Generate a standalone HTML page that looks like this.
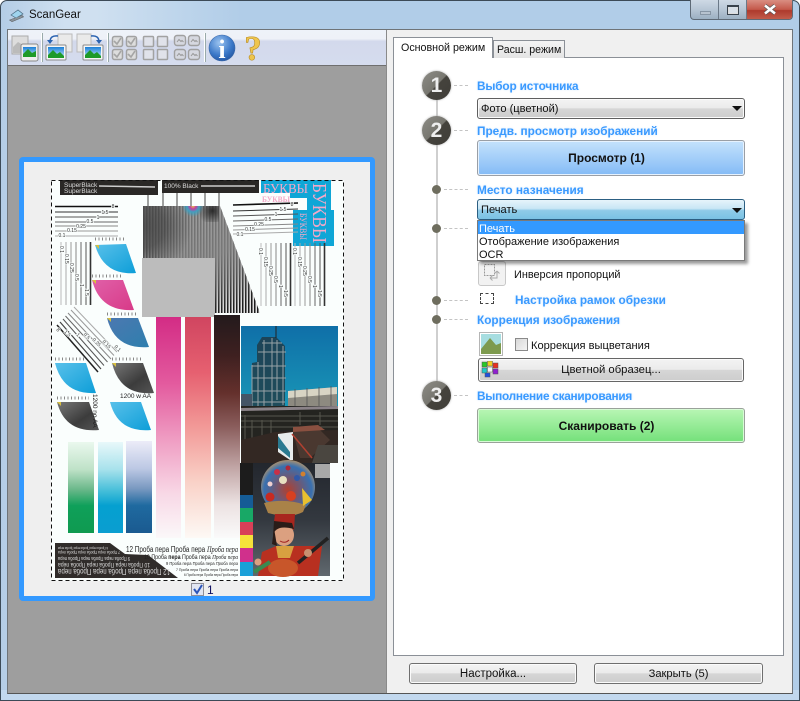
<!DOCTYPE html>
<html><head><meta charset="utf-8"><style>
*{box-sizing:border-box}
html,body{margin:0;padding:0;width:800px;height:701px;overflow:hidden;background:#fff}
body{font:11px "Liberation Sans",sans-serif;color:#111;position:relative}
.a{position:absolute}
.t{position:absolute;white-space:nowrap;line-height:14px}
.h{position:absolute;white-space:nowrap;font-weight:bold;color:#3a9aff;font-size:11.8px;line-height:14px;text-shadow:0 0 2px #cfe6ff}
.btn{position:absolute;border:1px solid #707070;border-radius:3px;background:linear-gradient(#f3f3f3 0,#ebebeb 48%,#d6d6d6 50%,#cdcdcd 100%);text-align:center;box-shadow:inset 0 0 0 1px #fbfbfb}
.num{position:absolute;width:29px;height:29px;border-radius:50%;background:linear-gradient(135deg,#8d8c86 0,#77766f 49%,#45433d 51%,#3f3d38 100%);box-shadow:0 0 2px #aaa;color:#eee;font:bold 21px/29px "Liberation Sans",sans-serif;text-align:center}
.dot{position:absolute;width:9px;height:9px;border-radius:50%;background:#6e6d5e}
.dash{position:absolute;width:14px;border-top:1px dashed #c4c4c4}
.arrow{position:absolute;width:0;height:0;border-left:5px solid transparent;border-right:5px solid transparent;border-top:5px solid #111}
</style></head><body>

<div class="a" style="left:0;top:0;width:800px;height:701px;border:1px solid #3c4a57;border-radius:7px 7px 0 0;background:linear-gradient(90deg,#b4cde6 0,#cfe0f0 8%,#cfe0f0 12%,#b1cde8 30%,#b1cde8 100%)"></div>
<div class="a" style="left:1px;top:690px;width:798px;height:10px;background:#c2d8ee"></div>

<svg class="a" style="left:8px;top:6px" width="18" height="18" viewBox="0 0 18 18"><path d="M1 14 L14 9 L16 11 L4 16Z" fill="#555"/><path d="M3 9 L10 4 L15 8 L8 12Z" fill="#9fd4ee" stroke="#4a6a80" stroke-width=".7"/><path d="M2 14 L14 9.5 L15 11 L4 15.5Z" fill="#8a949c"/></svg>
<div class="t" style="left:29px;top:8px;font-size:11.5px">ScanGear</div>

<div class="a" style="left:690px;top:0;width:103px;height:20px;border:1px solid #5e6a76;border-top:0;border-radius:0 0 4px 4px;overflow:hidden;background:linear-gradient(#ced9e5,#b7c6d5 50%,#9cb0c2)">
 <div class="a" style="left:27px;top:0;width:1px;height:20px;background:#6b7988"></div>
 <div class="a" style="left:55px;top:0;width:1px;height:20px;background:#6b7988"></div>
 <div class="a" style="left:9px;top:11px;width:11px;height:4px;background:#b7c3cf;border:1px solid #8796a5"></div>
 <div class="a" style="left:36px;top:5px;width:12px;height:10px;border:1px solid #39434d;background:#d8e0e8;box-shadow:inset 0 1px 0 #39434d,inset 0 0 0 1px #ddd"></div>
 <div class="a" style="left:56px;top:0;width:46px;height:20px;background:linear-gradient(#d98e82,#c4584a 48%,#ad3a2c 52%,#c4604e)"></div>
 <svg class="a" style="left:72px;top:4px" width="14" height="11"><path d="M2 1.5L12 9.5M12 1.5L2 9.5" stroke="#555" stroke-width="4"/><path d="M2 1.5L12 9.5M12 1.5L2 9.5" stroke="#fff" stroke-width="2.6"/></svg>
</div>

<!-- client -->
<div class="a" style="left:7px;top:29px;width:786px;height:665px;background:#f0f0f0;border:1px solid #6f7478;border-bottom:1px solid #555"></div>

<!-- toolbar -->
<div class="a" style="left:8px;top:30px;width:378px;height:35px;background:linear-gradient(#eef2f9 0,#eef1f8 25%,#d3d9ec 32%,#d5dcee 100%)"></div>
<div class="a" style="left:8px;top:65px;width:378px;height:1px;background:#6f6f6f"></div>
<div class="a" style="left:8px;top:66px;width:378px;height:627px;background:#9e9e9e"></div>
<div class="a" style="left:386px;top:30px;width:1px;height:663px;background:#8a8a8a"></div>

<svg class="a" style="left:8px;top:30px" width="290" height="35" viewBox="0 0 290 35">
 <defs>
  <linearGradient id="sky" x1="0" y1="0" x2="0" y2="1"><stop offset="0" stop-color="#1a7fd8"/><stop offset="1" stop-color="#d0eefa"/></linearGradient>
  <radialGradient id="inf" cx=".4" cy=".3" r=".8"><stop offset="0" stop-color="#9cc4f0"/><stop offset=".6" stop-color="#3b78c8"/><stop offset="1" stop-color="#1f4f9a"/></radialGradient>
  <g id="pic"><rect x="0" y="0" width="20" height="15" fill="#f6f6f6" stroke="#8a8a8a" rx="1"/><rect x="2" y="2" width="16" height="11" fill="url(#sky)"/><path d="M2 13V10L7 5L11 9L14 7L18 11V13Z" fill="#1e9a28"/></g>
  <g id="chk"><rect x=".5" y=".5" width="10" height="10" rx="2" fill="#ddd" stroke="#a2a2a2" stroke-width="1.5"/><path d="M2 5L5 8L9 2" fill="none" stroke="#a5a5a5" stroke-width="1.6"/></g>
  <g id="box"><rect x=".5" y=".5" width="10" height="10" rx="1" fill="#e0e2ea" stroke="#a2a2a2" stroke-width="1.5"/></g>
  <g id="pb"><rect x=".5" y=".5" width="11" height="10" rx="2.5" fill="#d6d8e0" stroke="#a0a0a0" stroke-width="1.4"/><path d="M3 7L5 4.5L7 6.5L8 5.5L9.5 7" fill="none" stroke="#999"/></g>
 </defs>
 <rect x="4" y="6" width="16" height="18" fill="#ddd" stroke="#aaa"/><path d="M5 17L10 12L15 15V23H5Z" fill="#bbb"/>
 <rect x="13" y="14" width="17" height="17" rx="2" fill="#eee" stroke="#888"/><rect x="15" y="17" width="13" height="10" fill="url(#sky)"/><path d="M15 27V24L20 19L24 23L28 21V27Z" fill="#1e9a28"/>
 <rect x="33" y="3" width="1" height="29" fill="#fff"/><rect x="34" y="3" width="1" height="29" fill="#9aa"/>
 <rect x="50" y="4" width="14" height="18" fill="#eaeaea" stroke="#bbb"/>
 <path d="M50 6Q42 5 42 12" fill="none" stroke="#2a62b0" stroke-width="1.5"/><path d="M39 10L45 10L42 14Z" fill="#2a62b0"/>
 <use href="#pic" x="38" y="15"/>
 <rect x="69" y="4" width="14" height="18" fill="#eaeaea" stroke="#bbb"/>
 <path d="M83 6Q91 5 91 12" fill="none" stroke="#2a62b0" stroke-width="1.5"/><path d="M88 10L94 10L91 14Z" fill="#2a62b0"/>
 <use href="#pic" x="75" y="15"/>
 <rect x="99" y="3" width="1" height="29" fill="#fff"/><rect x="100" y="3" width="1" height="29" fill="#9aa"/>
 <use href="#chk" x="104" y="6"/><use href="#chk" x="118" y="6"/><use href="#chk" x="104" y="19"/><use href="#chk" x="118" y="19"/>
 <use href="#box" x="135" y="6"/><use href="#box" x="149" y="6"/><use href="#box" x="135" y="19"/><use href="#box" x="149" y="19"/>
 <use href="#pb" x="166" y="5"/><use href="#pb" x="180" y="5"/><use href="#pb" x="166" y="19"/><use href="#pb" x="180" y="19"/>
 <rect x="196" y="3" width="1" height="29" fill="#fff"/><rect x="197" y="3" width="1" height="29" fill="#9aa"/>
 <circle cx="214" cy="18" r="13" fill="url(#inf)" stroke="#3a68a8" stroke-width=".6"/>
 <text x="214" y="28" font-family="Liberation Serif" font-weight="bold" font-size="26" fill="#fff" text-anchor="middle">i</text>
 <text x="245" y="30" font-family="Liberation Serif" font-weight="bold" font-size="35" fill="#eec54e" stroke="#b98c22" stroke-width=".6" text-anchor="middle">?</text>
</svg>

<!-- preview frame -->
<div class="a" style="left:19px;top:157px;width:356px;height:444px;background:#efefef;border:5px solid #3399ff;border-radius:4px"></div>
<div class="a" style="left:51px;top:180px;width:293px;height:401px;background:#fafefd"></div>

<!-- moire -->
<div class="a" style="left:143px;top:206px;width:118px;height:108px;clip-path:polygon(0 0,77px 0,117px 107px,0 107px);background:repeating-linear-gradient(90deg,#111 0,#111 1.5px,#eee 1.5px,#eee 3px)"></div>
<div class="a" style="left:143px;top:206px;width:118px;height:108px;clip-path:polygon(0 0,77px 0,117px 107px,0 107px);background:radial-gradient(circle at 50px 0,#e8c84a 0,#c040a0 3px,#40a0c0 6px,rgba(135,135,135,.8) 11px,rgba(135,135,135,.88) 55px,rgba(130,130,130,.6) 80px,rgba(130,130,130,.1) 110px)"></div>
<div class="a" style="left:143px;top:206px;width:50px;height:52px;background:radial-gradient(circle at 0 20px,rgba(30,30,30,.55) 0,rgba(30,30,30,.45) 22px,rgba(30,30,30,0) 48px)"></div>
<div class="a" style="left:197px;top:206px;width:22px;height:16px;background:radial-gradient(circle at 70% 30%,#2a2a2a,rgba(60,60,60,0) 75%)"></div>
<div class="a" style="left:142px;top:258px;width:73px;height:59px;background:#bcbcbc"></div>
<!-- strips -->
<div class="a" style="left:156px;top:317px;width:25px;height:221px;background:linear-gradient(#d32c85 0,#e35a9e 30%,#ef9cc2 55%,#f8d8e6 80%,#fbf8f9 100%)"></div>
<div class="a" style="left:185px;top:317px;width:26px;height:221px;background:linear-gradient(#d04560 0,#e66070 25%,#f29a98 50%,#f9d2c8 75%,#fdf9f5 100%)"></div>
<div class="a" style="left:214px;top:315px;width:26px;height:223px;background:linear-gradient(#231a1c 0,#3e2020 18%,#64302c 35%,#8a5d5c 50%,#c0a4a4 68%,#ece2e2 85%,#fafafa 100%)"></div>
<div class="a" style="left:68px;top:442px;width:26px;height:91px;background:linear-gradient(#eaf8ee 0,#bfe2c8 30%,#6bb88a 52%,#0fa05a 70%,#0f9a50 100%)"></div>
<div class="a" style="left:98px;top:442px;width:25px;height:91px;background:linear-gradient(#e8f8fa 0,#a8e2ec 30%,#40bcd8 55%,#05a0d0 70%,#0a9ed0 100%)"></div>
<div class="a" style="left:126px;top:441px;width:26px;height:92px;background:linear-gradient(#ececf8 0,#bcc8e4 30%,#7898c0 52%,#1f6aa0 70%,#1a5a90 100%)"></div>

<svg class="a" style="left:51px;top:180px" width="293" height="401" viewBox="51 180 293 401" font-family="Liberation Sans">
 <defs>
  <linearGradient id="cy" x1="0" y1="0" x2="1" y2="1"><stop offset="0" stop-color="#58c0ea"/><stop offset="1" stop-color="#0d9ed8"/></linearGradient>
  <linearGradient id="mg" x1="0" y1="0" x2="1" y2="1"><stop offset="0" stop-color="#e060a8"/><stop offset="1" stop-color="#d83a88"/></linearGradient>
  <linearGradient id="bl" x1="0" y1="0" x2="1" y2="1"><stop offset="0" stop-color="#4c78b0"/><stop offset="1" stop-color="#2e7fae"/></linearGradient>
  <linearGradient id="bk" x1="0" y1="0" x2="1" y2="1"><stop offset="0" stop-color="#777"/><stop offset=".6" stop-color="#3c3c3c"/><stop offset="1" stop-color="#555"/></linearGradient>
  <linearGradient id="sky2" x1="0" y1="0" x2="0" y2="1"><stop offset="0" stop-color="#0f6fa8"/><stop offset=".65" stop-color="#1a9ab8"/><stop offset="1" stop-color="#5cb4c0"/></linearGradient>
  <radialGradient id="hat" cx=".5" cy=".55" r=".55"><stop offset="0" stop-color="#b04030"/><stop offset=".45" stop-color="#6a5a78"/><stop offset=".8" stop-color="#3870b0"/><stop offset="1" stop-color="#a89070"/></radialGradient>
  <linearGradient id="bgw" x1="0" y1="0" x2="0" y2="1"><stop offset="0" stop-color="#23272e"/><stop offset=".5" stop-color="#33383f"/><stop offset="1" stop-color="#60686e"/></linearGradient>
 </defs>
 <!-- black boxes -->
 <rect x="60" y="180" width="98" height="15" fill="#2a2826"/>
 <text x="64" y="187" font-size="6.5" fill="#ddd">SuperBlack</text><text x="64" y="193" font-size="6.5" fill="#ddd">SuperBlack</text>
 <path d="M99 186L155 187" stroke="#ccc" stroke-width="1.5"/>
 <rect x="162" y="179" width="97" height="14" fill="#2a2826"/>
 <text x="164" y="188" font-size="6.5" fill="#ddd">100% Black</text>
 <path d="M201 186L255 186" stroke="#ccc" stroke-width="1.5"/>
 <path d="M148 195V206M163 193V206M177 193V206M191 193V206M205 193V206M219 193V206" stroke="#444" stroke-width="1"/>
 <!-- blue letters -->
 <path d="M261 179H331V210H334V246H293V210H307V198H290V193H261Z" fill="#0fa6d6"/>
 <text x="263" y="193" font-family="Liberation Serif" font-size="14" textLength="45" lengthAdjust="spacingAndGlyphs" fill="#f4a8c8">БУКВЫ</text>
 <text x="262" y="202" font-family="Liberation Serif" font-size="8" font-weight="bold" textLength="28" lengthAdjust="spacingAndGlyphs" fill="#f4a8c8">БУКВЫ</text>
 <text transform="translate(313,183) rotate(90)" font-family="Liberation Serif" font-size="20" textLength="60" lengthAdjust="spacingAndGlyphs" fill="#f4a8c8">БУКВЫ</text>
 <text transform="translate(300,213) rotate(90)" font-family="Liberation Serif" font-size="9" textLength="27" lengthAdjust="spacingAndGlyphs" fill="#f4a8c8">БУКВЫ</text>
 <!-- horizontal line groups -->
 <g stroke-width="1"><path d="M55 206.5H118" stroke="#111" stroke-width="1.6"/><path d="M55 212H118" stroke="#333"/><path d="M55 217H118" stroke="#555"/><path d="M55 222H118" stroke="#666"/><path d="M55 226H118" stroke="#888"/><path d="M55 231H118" stroke="#999"/><path d="M55 236H118" stroke="#aaa"/></g>
 <g font-size="5" fill="#333" text-anchor="middle" paint-order="stroke" stroke="#fafefd" stroke-width="1.5"><text x="113" y="208">8</text><text x="105" y="214">1.5</text><text x="98" y="219">1</text><text x="90" y="223">0.5</text><text x="81" y="228">0.25</text><text x="72" y="232">0.15</text><text x="62" y="237">0.1</text></g>
 <g stroke-width="1"><path d="M233 205L298 203" stroke="#111" stroke-width="1.6"/><path d="M233 211L298 209" stroke="#333"/><path d="M233 216L298 214" stroke="#555"/><path d="M233 221L298 219" stroke="#666"/><path d="M233 226L298 224" stroke="#888"/><path d="M233 230L298 228" stroke="#999"/><path d="M233 234L298 232" stroke="#aaa"/></g>
 <g font-size="5" fill="#333" text-anchor="middle" paint-order="stroke" stroke="#fafefd" stroke-width="1.5"><text x="292" y="206">8</text><text x="283" y="211">1.5</text><text x="276" y="216">1</text><text x="268" y="221">0.5</text><text x="259" y="226">0.25</text><text x="250" y="231">0.15</text><text x="240" y="236">0.1</text></g>
 <!-- vertical groups -->
 <g id="vg"><path d="M61 242V305" stroke="#bbb"/><path d="M66 242V305" stroke="#aaa"/><path d="M71 242V305" stroke="#999"/><path d="M76 242V305" stroke="#888"/><path d="M81 242V305" stroke="#666"/><path d="M86 242V305" stroke="#555"/><path d="M90.5 242V305" stroke="#333" stroke-width="1.6"/></g>
 <use href="#vg" x="200" y="1"/>
 <use href="#vg" x="234" y="1"/>
 <g font-size="5" fill="#333" paint-order="stroke" stroke="#fafefd" stroke-width="1.5"><text transform="translate(60,246) rotate(90)">0.1</text><text transform="translate(65,254) rotate(90)">0.15</text><text transform="translate(70,263) rotate(90)">0.25</text><text transform="translate(75,274) rotate(90)">0.5</text><text transform="translate(80,284) rotate(90)">1</text><text transform="translate(85,289) rotate(90)">1.5</text>
 <text transform="translate(259,248) rotate(90)">0.1</text><text transform="translate(264,257) rotate(90)">0.15</text><text transform="translate(269,266) rotate(90)">0.25</text><text transform="translate(274,276) rotate(90)">0.5</text><text transform="translate(279,285) rotate(90)">1</text><text transform="translate(284,290) rotate(90)">1.5</text>
 <text transform="translate(293,248) rotate(90)">0.1</text><text transform="translate(298,257) rotate(90)">0.15</text><text transform="translate(303,266) rotate(90)">0.25</text><text transform="translate(308,276) rotate(90)">0.5</text><text transform="translate(313,285) rotate(90)">1</text><text transform="translate(318,290) rotate(90)">1.5</text></g>
 <!-- diagonal -->
 <g stroke-width="1"><path d="M57 325L98 372" stroke="#222" stroke-width="1.5"/><path d="M60 322L101 369" stroke="#444" stroke-width="1.2"/><path d="M63 319L104 365.5" stroke="#555"/><path d="M65.5 316L107.5 362" stroke="#666"/><path d="M68 313L111 359" stroke="#888"/><path d="M71 310L114 355.5" stroke="#999"/><path d="M74 307L117 352" stroke="#aaa"/></g>
 <g font-size="5" fill="#333" paint-order="stroke" stroke="#fafefd" stroke-width="1.5"><text transform="translate(56,330) rotate(45)">8</text><text transform="translate(64,332) rotate(45)">1.5</text><text transform="translate(76,335) rotate(45)">1</text><text transform="translate(83,335) rotate(45)">0.5</text><text transform="translate(92,340) rotate(45)">0.25</text><text transform="translate(102,342) rotate(45)">0.15</text><text transform="translate(114,347) rotate(45)">0.1</text></g>
 <!-- tick rows -->
 <path d="M95 239H126M92 276H123M107 314H138M55 359H86M112 359H143M57 398H89" stroke="#888" stroke-width="3" stroke-dasharray="1 2.5"/>
 <!-- wedges -->
 <path d="M95 245L126 244L136 273Q104 276 95 245Z" fill="url(#cy)"/>
 <path d="M92 280L123 280L134 310Q100 312 92 280Z" fill="url(#mg)"/>
 <path d="M107 318L138 318L149 347Q115 350 107 318Z" fill="url(#bl)"/>
 <path d="M55 363L86 363L96 393Q63 395 55 363Z" fill="url(#cy)"/>
 <path d="M112 363L143 363L154 393Q120 396 112 363Z" fill="url(#bk)"/>
 <path d="M57 402L89 402L99 430Q65 433 57 402Z" fill="url(#bk)"/>
 <path d="M110 402L141 402L151 430Q118 433 110 402Z" fill="url(#cy)"/>
 <path d="M95 245h4v4zM92 280h4v4zM107 318h4v4zM57 402h4v4zM112 363h4v4z" fill="#d8c040"/>
 <text x="120" y="398" font-size="6.5" fill="#222">1200 w AA</text>
 <text transform="translate(93,394) rotate(90)" font-size="6.5" fill="#222">1200 no AA</text>
 <!-- refinery -->
 <rect x="241" y="326" width="97" height="137" fill="url(#sky2)"/>
 <path d="M252 407V363L257 362V345L262 337H276L285 346V407Z" fill="#22343c" opacity=".75"/>
 <g stroke="#98a2a6" stroke-width="1" fill="none"><path d="M252 365V407M258 362V407M264 340V407M272 338V407M277 340V400M283 346V405"/><path d="M252 366H286M252 378H286M252 391H286M258 352H286M262 343H282M252 402H285"/></g>
 <path d="M276 326V338" stroke="#222"/>
 <path d="M241 394H252V407H241Z" fill="#456"/>
 <path d="M288 391L337 387V407H288Z" fill="#8d8a80"/><path d="M288 391L337 387V394L288 398Z" fill="#d8d4c4"/><path d="M295 389V407M307 388V407M319 387V407M331 386V407" stroke="#555" stroke-width=".8"/>
 <path d="M241 406H338V463H241Z" fill="#242420"/>
 <path d="M241 408L338 406V409L241 411Z" fill="#8a8288"/>
 <path d="M241 416H338M241 421H338M241 427H338M245 415V460M252 420V458M262 420V450M271 420V445M300 412V425M320 412V425" stroke="#56564e" stroke-width="1"/>
 <path d="M241 440L275 432L338 430V463H241Z" fill="#332823"/>
 <path d="M278 434L293 432V460L290 460L278 452Z" fill="#e8ecec"/><path d="M278 436L290 452V458L278 448Z" fill="#2a7a90"/>
 <path d="M293 432L318 428L330 440L310 458H300Z" fill="#4a3830"/>
 <path d="M292 434L312 458" stroke="#b04030" stroke-width="1.5"/>
 <path d="M293 427L318 425L325 430L293 432Z" fill="#8a5040"/>
 <path d="M318 445H338V463H312Z" fill="#4a4640"/>
 <!-- woman photo -->
 <rect x="240" y="463" width="90" height="113" fill="url(#bgw)"/>
 <rect x="240" y="463" width="13" height="32" fill="#1c1c1c"/>
 <rect x="240" y="495" width="13" height="13" fill="#155c96"/>
 <rect x="240" y="508" width="13" height="14" fill="#18a866"/>
 <rect x="240" y="522" width="13" height="13" fill="#d84058"/>
 <rect x="240" y="535" width="13" height="13" fill="#f6e23a"/>
 <rect x="240" y="548" width="13" height="14" fill="#d0308c"/>
 <rect x="240" y="562" width="13" height="14" fill="#18a0d8"/>
 <rect x="315" y="464" width="15" height="14" fill="#a8a8a8"/>
 <rect x="330" y="464" width="8" height="112" fill="#fafefd"/>
 <circle cx="288" cy="487" r="27" fill="url(#hat)"/>
 <path d="M264 503Q285 498 306 505L303 512Q290 519 268 513Z" fill="#a98248"/>
 <circle cx="270" cy="497" r="4.5" fill="#c82a20"/><circle cx="291" cy="496" r="5" fill="#d84020"/><path d="M302 488L312 500L303 506Z" fill="#e8c030"/><circle cx="283" cy="480" r="4" fill="#e8e0c0"/><circle cx="277" cy="472" r="3" fill="#c83048"/><circle cx="297" cy="478" r="3" fill="#3058a8"/><circle cx="288" cy="468" r="2.5" fill="#b02838"/><circle cx="270" cy="484" r="2.5" fill="#f0d0d0"/><circle cx="303" cy="474" r="2.5" fill="#d08030"/>
 <path d="M275 514H295L294 530L283 525L274 522Z" fill="#a8261e"/>
 <ellipse cx="284" cy="535" rx="10" ry="11" fill="#dba080"/><path d="M273 536Q275 524 294 529L292 523L274 521Z" fill="#2a1c18"/><path d="M274 528L272 544L277 546Z" fill="#2a1c18"/>
 <path d="M280 541Q285 544 289 540" stroke="#a02020" fill="none"/>
 <path d="M262 552L276 546H292L322 546L318 576H258Z" fill="#b83020"/>
 <path d="M276 546H294L290 558L278 558Z" fill="#d8a040"/>
 <ellipse cx="283" cy="568" rx="15" ry="9" fill="#c8562a"/>
 <path d="M298 563L328 538" stroke="#222" stroke-width="3.5"/>
 <path d="M254 572L270 562" stroke="#3a8a50" stroke-width="4"/>
 <circle cx="258" cy="562" r="3.5" fill="#dba080"/><circle cx="308" cy="553" r="4" fill="#c89070"/>
 <!-- bottom text -->
 <path d="M55 543H110L125 554L148 555L178 578H55Z" fill="#302c2a"/>
 <g fill="#dcdcdc">
  <text transform="translate(170,569) rotate(180)" font-size="8" textLength="112" lengthAdjust="spacingAndGlyphs">12 Проба пера Проба пера Проба пера</text>
  <text transform="translate(150,563) rotate(180)" font-size="6" textLength="92" lengthAdjust="spacingAndGlyphs">10 Проба пера Проба пера Проба пера</text>
  <text transform="translate(130,557) rotate(180)" font-size="5" textLength="72" lengthAdjust="spacingAndGlyphs">9 Проба пера Проба пера Проба пера</text>
  <text transform="translate(120,551) rotate(180)" font-size="4.5" textLength="62" lengthAdjust="spacingAndGlyphs">7 Проба пера Проба пера Проба пера</text>
  <text transform="translate(108,547) rotate(180)" font-size="4" textLength="50" lengthAdjust="spacingAndGlyphs">6 Проба пера Проба пера Проба пера</text>
 </g>
 <g fill="#222">
  <text x="126" y="552" font-size="8" textLength="112" lengthAdjust="spacingAndGlyphs">12 Проба пера Проба пера <tspan font-style="italic" font-family="Liberation Serif">Проба пера</tspan></text>
  <text x="144" y="559" font-size="6" textLength="94" lengthAdjust="spacingAndGlyphs">10 Проба <tspan font-weight="bold">пера</tspan> Проба пера <tspan font-style="italic" font-family="Liberation Serif">Проба пера</tspan></text>
  <text x="166" y="565" font-size="4.5" textLength="72" lengthAdjust="spacingAndGlyphs">9 Проба пера Проба пера <tspan font-style="italic">Проба пера</tspan></text>
  <text x="176" y="571" font-size="4" textLength="62" lengthAdjust="spacingAndGlyphs">7 Проба пера Проба пера Проба пера</text>
  <text x="184" y="576" font-size="3.5" textLength="54" lengthAdjust="spacingAndGlyphs">6 Проба пера Проба пера Проба пера</text>
 </g>
 <rect x="51.5" y="180.5" width="292" height="400" fill="none" stroke="#111" stroke-dasharray="4 3" stroke-width="1"/>
</svg>

<!-- page checkbox -->
<div class="a" style="left:191px;top:583px;width:13px;height:13px;border:1px solid #8f8f98;background:#e2e6f2"></div>
<svg class="a" style="left:191px;top:582px" width="14" height="14"><path d="M3 7L6 11L11 3" fill="none" stroke="#2c55b8" stroke-width="2"/></svg>
<div class="t" style="left:207px;top:583px;color:#101060;font-size:12px">1</div>

<!-- tabs -->
<div class="a" style="left:393px;top:57px;width:391px;height:599px;background:#fff;border:1px solid #8b9097"></div>
<div class="a" style="left:493px;top:40px;width:72px;height:18px;background:linear-gradient(#f4f4f4,#e4e4e4);border:1px solid #8b9097;border-bottom:0"></div>
<div class="t" style="left:497px;top:43px;font-size:10.6px">Расш. режим</div>
<div class="a" style="left:393px;top:37px;width:100px;height:21px;background:#fff;border:1px solid #8b9097;border-bottom:0"></div>
<div class="t" style="left:401px;top:41px;font-size:10.7px">Основной режим</div>

<!-- step rail -->
<div class="a" style="left:436px;top:85px;width:2px;height:310px;background:#cfcfcf"></div>
<div class="num" style="left:422px;top:71px">1</div>
<div class="num" style="left:422px;top:116px">2</div>
<div class="num" style="left:422px;top:381px">3</div>
<div class="dot" style="left:432px;top:185px"></div>
<div class="dot" style="left:432px;top:224px"></div>
<div class="dot" style="left:432px;top:296px"></div>
<div class="dot" style="left:432px;top:315px"></div>
<div class="dash" style="left:454px;top:85px"></div>
<div class="dash" style="left:454px;top:130px"></div>
<div class="dash" style="left:444px;top:189px;width:24px"></div>
<div class="dash" style="left:444px;top:228px;width:24px"></div>
<div class="dash" style="left:444px;top:300px;width:24px"></div>
<div class="dash" style="left:444px;top:319px;width:24px"></div>
<div class="dash" style="left:454px;top:395px"></div>

<div class="h" style="left:477px;top:79px;letter-spacing:-.15px">Выбор источника</div>
<div class="btn" style="left:477px;top:98px;width:268px;height:21px;text-align:left;padding:3px 0 0 3px;line-height:15px;border-color:#5f5f5f;font-size:11.1px">Фото (цветной)</div>
<div class="arrow" style="left:732px;top:106px"></div>

<div class="h" style="left:477px;top:124px">Предв. просмотр изображений</div>
<div class="a" style="left:477px;top:140px;width:268px;height:36px;border:1px solid #9a9fa6;border-radius:3px;background:linear-gradient(#c4e2fc,#84bbf6);box-shadow:inset 0 0 0 1px #e6f2fe;text-align:center;font-weight:bold;font-size:12px;line-height:35px;padding-right:9px">Просмотр (1)</div>

<div class="h" style="left:477px;top:183px">Место назначения</div>
<div class="a" style="left:477px;top:199px;width:268px;height:21px;border:1px solid #2c5f82;border-radius:3px;background:linear-gradient(#e6f4fb,#c8e6f5 45%,#8fcbe8 55%,#7ac2e4);padding:3px 0 0 3px;line-height:15px;font-size:11.1px">Печать</div>
<div class="arrow" style="left:732px;top:208px"></div>

<div class="h" style="left:477px;top:313px">Коррекция изображения</div>
<div class="a" style="left:478px;top:261px;width:28px;height:25px;border:1px solid #c8c8c8;border-radius:3px;background:#f2f2f2"></div>
<svg class="a" style="left:484px;top:264px" width="17" height="18"><rect x=".5" y=".5" width="10" height="11" fill="none" stroke="#999" stroke-dasharray="2 1"/><path d="M6 14H13V7M13 7L10.5 9.5M13 7L15.5 9.5M6 14L8.5 11.5M6 14L8.5 16.5" fill="none" stroke="#aaa"/></svg>
<div class="t" style="left:514px;top:268px;font-size:10.9px">Инверсия пропорций</div>

<div class="a" style="left:480px;top:293px;width:14px;height:11px;border:1px dashed #444"></div>
<div class="h" style="left:515px;top:293px">Настройка рамок обрезки</div>

<div class="a" style="left:479px;top:332px;width:24px;height:24px;border:1px solid #b5b5b5;background:#fff;padding:1px"></div>
<svg class="a" style="left:481px;top:334px" width="20" height="20"><rect width="20" height="20" fill="#a6dde0"/><path d="M0 20V15L9 4L15 11L20 9V20Z" fill="#7d9a4e"/></svg>
<div class="a" style="left:515px;top:338px;width:13px;height:13px;border:1px solid #8a8a8a;background:linear-gradient(135deg,#d8d8d8,#f4f4f4)"></div>
<div class="t" style="left:531px;top:339px;font-size:11.1px">Коррекция выцветания</div>

<div class="btn" style="left:478px;top:358px;width:266px;height:24px;line-height:23px;border-color:#666;font-size:11.3px">Цветной образец...</div>
<svg class="a" style="left:481px;top:361px" width="18" height="17"><rect x="1" y="1" width="5" height="5" fill="#28c828" stroke="#555" stroke-width=".5"/><rect x="6.5" y="0" width="5" height="5" fill="#f0d020" stroke="#555" stroke-width=".5"/><rect x="12" y="2" width="5" height="5" fill="#e83020" stroke="#555" stroke-width=".5"/><rect x="1" y="7" width="5" height="5" fill="#20c8c8" stroke="#555" stroke-width=".5"/><rect x="6.5" y="6" width="5" height="5" fill="#f4f4f4" stroke="#555" stroke-width=".5"/><rect x="12" y="8" width="5" height="5" fill="#9020d0" stroke="#555" stroke-width=".5"/><rect x="4" y="12" width="5" height="4" fill="#2050e0" stroke="#555" stroke-width=".5"/></svg>

<div class="h" style="left:477px;top:389px;letter-spacing:-.25px">Выполнение сканирования</div>
<div class="a" style="left:477px;top:408px;width:268px;height:35px;border:1px solid #9aa29a;border-radius:3px;background:linear-gradient(#b8f6b4,#74e07a);box-shadow:inset 0 0 0 1px #d8fbd6;text-align:center;font-weight:bold;font-size:12px;line-height:34px;padding-right:9px">Сканировать (2)</div>

<!-- dropdown -->
<div class="a" style="left:477px;top:220px;width:268px;height:41px;background:#fff;border:1px solid #7a7a7a;box-shadow:3px 3px 3px rgba(0,0,0,.4)"></div>
<div class="a" style="left:478px;top:221px;width:266px;height:13px;background:#3399ff"></div>
<div class="t" style="left:479px;top:222px;color:#fff;line-height:14px">Печать</div>
<div class="t" style="left:479px;top:235px;line-height:14px">Отображение изображения</div>
<div class="t" style="left:479px;top:248px;line-height:14px">OCR</div>

<!-- bottom buttons -->
<div class="btn" style="left:409px;top:663px;width:168px;height:21px;line-height:21px;border-color:#6f6f6f;font-size:11.5px">Настройка...</div>
<div class="btn" style="left:594px;top:663px;width:169px;height:21px;line-height:21px;border-color:#6f6f6f;font-size:11.2px">Закрыть (5)</div>

</body></html>
